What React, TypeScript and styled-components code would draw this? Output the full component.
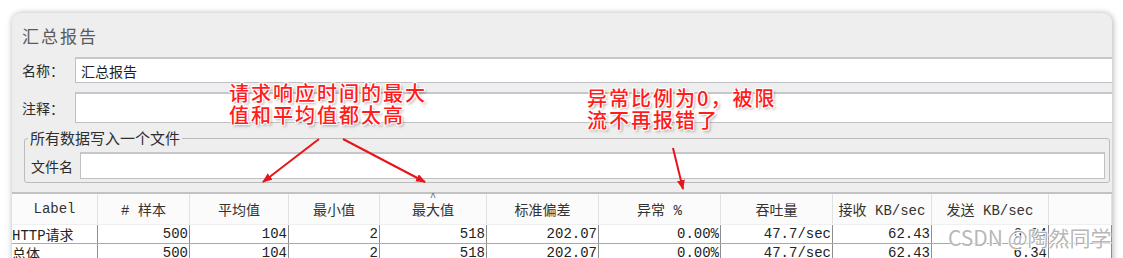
import styled, { createGlobalStyle } from 'styled-components';

const GlobalStyle = createGlobalStyle`
  html, body {
    margin: 0;
    padding: 0;
    background: #ffffff;
  }
  body {
    font-family: "Noto Sans CJK SC", "Noto Sans", sans-serif;
    overflow: hidden;
  }
`;

const Page = styled.div`
  position: relative;
  width: 1123px;
  height: 258px;
  padding: 13px 0 0 12px;
  box-sizing: border-box;
  overflow: hidden;
`;

const Panel = styled.div`
  width: 1100px;
  height: 262px;
  background: #eeeeee;
  border-radius: 9px 9px 0 0;
  box-shadow: 0 0 6px rgba(0, 0, 0, 0.22), 2px 1px 6px rgba(0, 0, 0, 0.12);
  overflow: hidden;
`;

const Title = styled.div`
  height: 44px;
  padding: 13px 0 0 10px;
  box-sizing: border-box;
  font-size: 17px;
  line-height: 20px;
  letter-spacing: 2px;
  color: #5a5a5a;
`;

const FormRow = styled.div<{ h: number; gap?: number }>`
  display: flex;
  align-items: stretch;
  height: ${(p) => p.h}px;
  margin-top: ${(p) => p.gap || 0}px;
`;

const FieldLabel = styled.div<{ w: number; pl: number }>`
  width: ${(p) => p.w}px;
  padding-left: ${(p) => p.pl}px;
  box-sizing: border-box;
  display: flex;
  align-items: center;
  font-size: 14px;
  color: #2a2a2a;
  flex-shrink: 0;
`;

const TextBox = styled.div<{ bleed?: boolean }>`
  flex: 1;
  display: flex;
  align-items: center;
  padding-left: 5px;
  background: #ffffff;
  border: 1px solid #bfbfc4;
  border-top: 2px solid #c6c6cb;
  margin-right: ${(p) => (p.bleed ? '-20px' : '0')};
  font-size: 14px;
  color: #1e1e1e;
`;

const GroupBox = styled.div`
  position: relative;
  height: 45px;
  margin: 15px 2px 0 12px;
  padding: 13px 4px 0 5px;
  box-sizing: border-box;
  border: 1px solid #bcbcbc;
  border-radius: 3px;
`;

const Legend = styled.span`
  position: absolute;
  top: -10px;
  left: 3px;
  padding: 0 2px;
  background: #eeeeee;
  font-size: 15px;
  line-height: 18px;
  color: #2e2e2e;
`;

const Table = styled.div`
  margin-top: 9px;
  border-top: 2px solid #c2c2c2;
  background: #ffffff;
`;

const columns = '86px 92px 99px 91px 107px 112px 122px 112px 99px 117px 1fr';

const HeadRow = styled.div`
  display: grid;
  grid-template-columns: ${columns};
  height: 30px;
  background: #fbfbfb;
  border-bottom: 1px solid #efefef;
`;

const HeadCell = styled.div`
  position: relative;
  display: flex;
  align-items: center;
  justify-content: center;
  border-right: 1px solid #e2e2e2;
  font-family: "Liberation Mono", "Noto Sans CJK SC", monospace;
  font-size: 14px;
  color: #333333;
  white-space: pre;
`;

const SortMark = styled.span`
  position: absolute;
  top: -1px;
  left: 50%;
  transform: translateX(-50%);
  font-size: 10px;
  line-height: 10px;
  color: #555;
`;

const DataRow = styled.div`
  display: grid;
  grid-template-columns: ${columns};
  height: 19px;
  border-bottom: 1px solid #a9a9a9;
  box-sizing: border-box;
`;

const DataCell = styled.div<{ left?: boolean }>`
  display: flex;
  align-items: center;
  justify-content: ${(p) => (p.left ? 'flex-start' : 'flex-end')};
  padding-right: 1px;
  border-right: 1px solid #8e8e8e;
  font-family: "Liberation Mono", "Noto Sans CJK SC", monospace;
  font-size: 14px;
  color: #222222;
  white-space: nowrap;
  overflow: hidden;
`;

const Note = styled.div<{ x: number; y: number }>`
  position: absolute;
  left: ${(p) => p.x}px;
  top: ${(p) => p.y}px;
  font-size: 20px;
  line-height: 22px;
  letter-spacing: 2px;
  font-weight: 500;
  color: #ff1c1c;
  white-space: pre;
  text-shadow: -1px -1px 0 #fff, 1px -1px 0 #fff, -1px 1px 0 #fff, 1px 1px 0 #fff,
    2px 2px 3px rgba(0, 0, 0, 0.35);
`;

const Arrows = styled.svg`
  position: absolute;
  left: 0;
  top: 0;
  pointer-events: none;
`;

const Watermark = styled.div`
  position: absolute;
  left: 948px;
  top: 224px;
  font-size: 21px;
  line-height: 26px;
  color: rgba(170, 170, 170, 0.85);
  white-space: nowrap;
  text-shadow: -1px -1px 0 #fff, 1px 1px 0 #fff;
`;

const headers = ['Label', '# 样本', '平均值', '最小值', '最大值', '标准偏差', '异常 %', '吞吐量', '接收 KB/sec', '发送 KB/sec', ''];

const rows = [
  ['HTTP请求', '500', '104', '2', '518', '202.07', '0.00%', '47.7/sec', '62.43', '6.34', ''],
  ['总体', '500', '104', '2', '518', '202.07', '0.00%', '47.7/sec', '62.43', '6.34', ''],
];

export default function App() {
  return (
    <Page>
      <GlobalStyle />
      <Panel>
        <Title>汇总报告</Title>
        <FormRow h={26}>
          <FieldLabel w={63} pl={10}>名称：</FieldLabel>
          <TextBox bleed>汇总报告</TextBox>
        </FormRow>
        <FormRow h={31} gap={9}>
          <FieldLabel w={63} pl={10}>注释：</FieldLabel>
          <TextBox bleed />
        </FormRow>
        <GroupBox>
          <Legend>所有数据写入一个文件</Legend>
          <FormRow h={27}>
            <FieldLabel w={50} pl={1}>文件名</FieldLabel>
            <TextBox />
          </FormRow>
        </GroupBox>
        <Table>
          <HeadRow>
            {headers.map((h, i) => (
              <HeadCell key={i}>
                {h === '最大值' && <SortMark>^</SortMark>}
                {h}
              </HeadCell>
            ))}
          </HeadRow>
          {rows.map((r, ri) => (
            <DataRow key={ri}>
              {r.map((c, ci) => (
                <DataCell key={ci} left={ci === 0}>
                  {c}
                </DataCell>
              ))}
            </DataRow>
          ))}
        </Table>
      </Panel>

      <Note x={229} y={82}>{'请求响应时间的最大\n值和平均值都太高'}</Note>
      <Note x={587} y={87}>{'异常比例为0，被限\n流不再报错了'}</Note>

      <Arrows width={1123} height={258}>
        <defs>
          <marker id="head" markerWidth="10" markerHeight="8" refX="9" refY="4" orient="auto" markerUnits="userSpaceOnUse">
            <path d="M0,0 L10,4 L0,8 Z" fill="#e8141a" />
          </marker>
        </defs>
        <line x1={319} y1={139} x2={263} y2={182} stroke="#e8141a" strokeWidth={2} markerEnd="url(#head)" />
        <line x1={343} y1={139} x2={425} y2={182} stroke="#e8141a" strokeWidth={2} markerEnd="url(#head)" />
        <line x1={673} y1={148} x2={683} y2={189} stroke="#e8141a" strokeWidth={2} markerEnd="url(#head)" />
      </Arrows>

      <Watermark>CSDN @陶然同学</Watermark>
    </Page>
  );
}
